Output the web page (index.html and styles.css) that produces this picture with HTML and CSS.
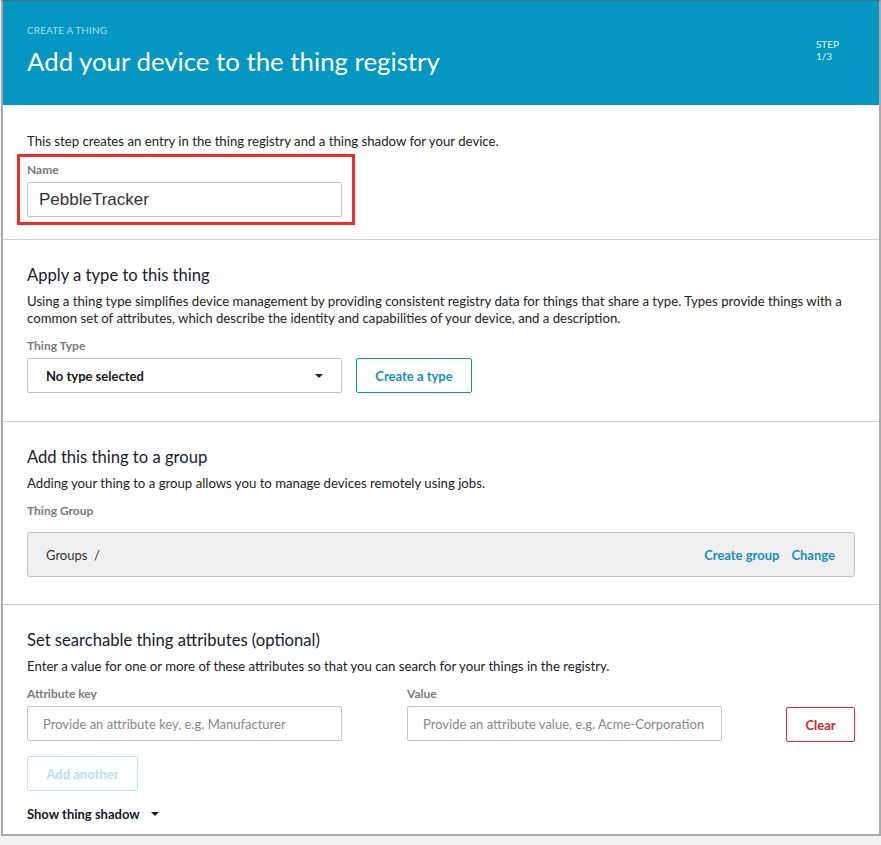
FILE: index.html
```html
<!DOCTYPE html>
<html>
<head>
<meta charset="utf-8">
<link rel="stylesheet" href="styles.css">
</head>
<body>
<div class="frame">
  <header class="hero">
    <div class="hero-text">
      <div class="eyebrow">CREATE A THING</div>
      <h1 class="title">Add your device to the thing registry</h1>
    </div>
    <div class="step">STEP<br>1/3</div>
  </header>

  <section class="sec sec-first">
    <p class="intro">This step creates an entry in the thing registry and a thing shadow for your device.</p>
    <div class="highlight">
      <label class="label label-name">Name</label>
      <div class="input name-input">PebbleTracker</div>
    </div>
  </section>

  <section class="sec sec-type">
    <h2 class="heading">Apply a type to this thing</h2>
    <p class="desc">Using a thing type simplifies device management by providing consistent registry data for things that share a type. Types provide things with a common set of attributes, which describe the identity and capabilities of your device, and a description.</p>
    <label class="label label-gap">Thing Type</label>
    <div class="row">
      <div class="select">
        <span>No type selected</span>
        <svg class="caret" width="8" height="4" viewBox="0 0 8 4"><path d="M0 0H8L4 4Z" fill="#222"/></svg>
      </div>
      <button class="btn btn-blue">Create a type</button>
    </div>
  </section>

  <section class="sec">
    <h2 class="heading">Add this thing to a group</h2>
    <p class="desc">Adding your thing to a group allows you to manage devices remotely using jobs.</p>
    <label class="label label-gap">Thing Group</label>
    <div class="groups">
      <span class="groups-path">Groups&nbsp;&nbsp;/</span>
      <span class="links"><a class="link">Create group</a><a class="link">Change</a></span>
    </div>
  </section>

  <section class="sec sec-last">
    <h2 class="heading">Set searchable thing attributes (optional)</h2>
    <p class="desc">Enter a value for one or more of these attributes so that you can search for your things in the registry.</p>
    <div class="attr-row">
      <div class="field">
        <label class="label label-gap">Attribute key</label>
        <div class="input placeholder">Provide an attribute key, e.g. Manufacturer</div>
      </div>
      <div class="field">
        <label class="label label-gap">Value</label>
        <div class="input placeholder">Provide an attribute value, e.g. Acme-Corporation</div>
      </div>
      <button class="btn btn-red">Clear</button>
    </div>
    <button class="btn btn-disabled">Add another</button>
    <div class="shadow-toggle">Show thing shadow
      <svg class="caret2" width="8" height="4" viewBox="0 0 8 4"><path d="M0 0H8L4 4Z" fill="#16191f"/></svg>
    </div>
  </section>
</div>
</body>
</html>
```

FILE: styles.css
```css
html, body {
  margin: 0;
  padding: 0;
  background: #f2f2f2;
}
body {
  font-family: Lato, "Open Sans", sans-serif;
  color: #222;
  font-size: 13.2px;
}
.frame {
  width: 876px;
  margin-left: 1px;
  background: #fff;
  border-left: 2px solid #a9a9a9;
  border-right: 2px solid #a9a9a9;
  border-bottom: 2px solid #a9a9a9;
  border-top: 1px solid #4f6f7f;
}
.hero {
  background: #0397c1;
  height: 104px;
  display: flex;
  justify-content: space-between;
  padding: 0 40px 0 24px;
  box-sizing: border-box;
}
.eyebrow {
  font-size: 10px;
  color: #a6def0;
  margin-top: 23px;
  line-height: 12px;
  letter-spacing: 0.1px;
}
.title {
  margin: 7px 0 0;
  font-weight: 400;
  font-size: 25.8px;
  line-height: 36px;
  color: #fff;
}
.step {
  font-size: 10px;
  line-height: 12px;
  color: #e6f4f9;
  margin-top: 37px;
}
.sec {
  border-top: 1px solid #cfcfcf;
  padding: 24px 24px 27px;
}
.sec-first {
  border-top: none;
  padding-top: 28px;
  padding-bottom: 14px;
}
.sec-type {
  padding-bottom: 28px;
}
.intro {
  margin: 0;
  line-height: 17px;
}
.highlight {
  margin: 4px 0 0 -10px;
  width: 315px;
  border: 3px solid #f12b25;
  padding: 5px 10px 5px 7px;
}
.label {
  display: block;
  font-size: 12px;
  font-weight: 700;
  color: #7a7a7a;
  line-height: 16px;
  margin-bottom: 4px;
}
.input {
  box-sizing: border-box;
  width: 315px;
  height: 35px;
  border: 1px solid #c4c4c4;
  border-radius: 2px;
  display: flex;
  align-items: center;
  padding: 0 11px;
}
.name-input {
  font-family: "Liberation Sans", Arial, sans-serif;
  font-size: 17px;
  color: #333;
}
.placeholder {
  padding: 0 15px;
  color: #878787;
  font-size: 13px;
}
.heading {
  margin: 0;
  font-weight: 400;
  font-size: 16.6px;
  line-height: 22px;
  color: #16222b;
}
.desc {
  margin: 7px 0 11px;
  line-height: 17px;
}
.row {
  display: flex;
  gap: 14px;
}
.select {
  box-sizing: border-box;
  width: 315px;
  height: 35px;
  border: 1px solid #c4c4c4;
  border-radius: 2px;
  display: flex;
  align-items: center;
  justify-content: space-between;
  padding: 0 18px 0 18px;
  font-weight: 700;
  font-size: 13px;
  color: #16191f;
}
.btn {
  box-sizing: border-box;
  height: 35px;
  background: #fff;
  font-family: Lato, "Open Sans", sans-serif;
  font-weight: 700;
  font-size: 13px;
  border-radius: 2px;
  padding: 0;
}
.btn-blue {
  width: 116px;
  border: 1px solid #1290bb;
  color: #1590bd;
}
.groups {
  margin-top: 13px;
  box-sizing: border-box;
  height: 45px;
  background: #efefef;
  border: 1px solid #c6c6c6;
  border-radius: 3px;
  display: flex;
  align-items: center;
  justify-content: space-between;
  padding: 0 19px 0 18px;
  color: #333;
  font-size: 13px;
}
.links {
  display: flex;
  gap: 12px;
}
.link {
  color: #1592bd;
  font-weight: 700;
}
.sec-last {
  padding-bottom: 12px;
}
.attr-row {
  display: flex;
  align-items: flex-end;
  gap: 65px;
}
.btn-red {
  margin: 0 0 -1px -1px;
  width: 69px;
  border: 1px solid #e02a22;
  color: #d6281e;
}
.btn-disabled {
  display: block;
  margin-top: 15px;
  width: 111px;
  border: 1px solid #bee4f1;
  color: #b6e0ef;
}
.shadow-toggle {
  margin-top: 15px;
  font-weight: 700;
  font-size: 13px;
  color: #16191f;
  line-height: 16px;
  display: flex;
  align-items: center;
  gap: 11px;
}
```
